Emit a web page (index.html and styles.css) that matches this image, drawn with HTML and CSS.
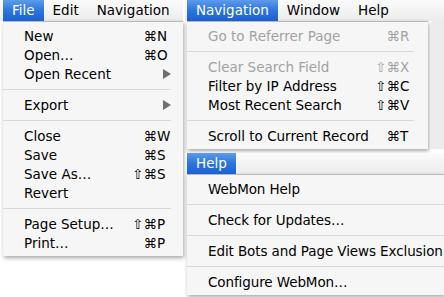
FILE: index.html
```html
<!DOCTYPE html>
<html lang="en">
<head>
  <meta charset="UTF-8">
  <title>WebMon Menus</title>
  <link rel="stylesheet" href="styles.css">
</head>
<body>

  <div class="screen">

    <!-- File menu -->
    <div class="panel panel-file">
      <div class="menubar">
        <span class="title active">File</span>
        <span class="title">Edit</span>
        <span class="title">Navigation</span>
      </div>
      <ul class="menu menu-file">
        <li class="item"><span class="label">New</span><span class="keys"><span class="mods">⌘</span><span class="key">N</span></span></li>
        <li class="item"><span class="label">Open…</span><span class="keys"><span class="mods">⌘</span><span class="key">O</span></span></li>
        <li class="item"><span class="label">Open Recent</span><span class="keys"><svg class="arrow" width="8" height="10" viewBox="0 0 8 10"><polygon points="0,0 8,5 0,10"/></svg></span></li>
        <li class="sep"></li>
        <li class="item"><span class="label">Export</span><span class="keys"><svg class="arrow" width="8" height="10" viewBox="0 0 8 10"><polygon points="0,0 8,5 0,10"/></svg></span></li>
        <li class="sep"></li>
        <li class="item"><span class="label">Close</span><span class="keys"><span class="mods">⌘</span><span class="key">W</span></span></li>
        <li class="item"><span class="label">Save</span><span class="keys"><span class="mods">⌘</span><span class="key">S</span></span></li>
        <li class="item"><span class="label">Save As…</span><span class="keys"><span class="mods">⇧⌘</span><span class="key">S</span></span></li>
        <li class="item"><span class="label">Revert</span></li>
        <li class="sep"></li>
        <li class="item"><span class="label">Page Setup…</span><span class="keys"><span class="mods">⇧⌘</span><span class="key">P</span></span></li>
        <li class="item"><span class="label">Print…</span><span class="keys"><span class="mods">⌘</span><span class="key">P</span></span></li>
      </ul>
    </div>

    <div class="stack">

      <!-- Navigation menu -->
      <div class="panel panel-nav">
        <div class="menubar">
          <span class="title active">Navigation</span>
          <span class="title">Window</span>
          <span class="title">Help</span>
        </div>
        <div class="drop-row">
          <ul class="menu menu-nav">
            <li class="item disabled"><span class="label">Go to Referrer Page</span><span class="keys"><span class="mods">⌘</span><span class="key">R</span></span></li>
            <li class="sep"></li>
            <li class="item disabled"><span class="label">Clear Search Field</span><span class="keys"><span class="mods">⇧⌘</span><span class="key">X</span></span></li>
            <li class="item"><span class="label">Filter by IP Address</span><span class="keys"><span class="mods">⇧⌘</span><span class="key">C</span></span></li>
            <li class="item"><span class="label">Most Recent Search</span><span class="keys"><span class="mods">⇧⌘</span><span class="key">V</span></span></li>
            <li class="sep"></li>
            <li class="item"><span class="label">Scroll to Current Record</span><span class="keys"><span class="mods">⌘</span><span class="key">T</span></span></li>
          </ul>
          <div class="behind"></div>
        </div>
      </div>

      <!-- Help menu -->
      <div class="panel panel-help">
        <div class="menubar">
          <span class="title active">Help</span>
        </div>
        <ul class="menu menu-help">
          <li class="item"><span class="label">WebMon Help</span></li>
          <li class="sep"></li>
          <li class="item"><span class="label">Check for Updates…</span></li>
          <li class="sep"></li>
          <li class="item"><span class="label">Edit Bots and Page Views Exclusion</span></li>
          <li class="sep"></li>
          <li class="item"><span class="label">Configure WebMon…</span></li>
        </ul>
      </div>

      <div class="window-edge"></div>
    </div>

  </div>

</body>
</html>
```

FILE: styles.css
```css
body {
  margin: 0;
  width: 444px;
  height: 297px;
  overflow: hidden;
  background: #fff;
  font-family: "DejaVu Sans", "Liberation Sans", sans-serif;
  font-size: 13.5px;
  color: #000;
}

.screen {
  display: flex;
  height: 297px;
}

.panel-file {
  width: 183px;
  flex: none;
}

.stack {
  flex: 1;
  min-width: 0;
  margin-left: 2px;
  display: flex;
  flex-direction: column;
  gap: 4px;
}

/* menu bar */
.menubar {
  display: flex;
  height: 21px;
  background: linear-gradient(#fbfbfb, #ececec);
  white-space: nowrap;
}

.panel-file .menubar {
  padding-left: 3px;
}

.panel-nav .menubar,
.panel-help .menubar {
  padding-left: 2px;
}

.title {
  padding: 0 9px;
  line-height: 21px;
}

.title.active {
  color: #fff;
  background: linear-gradient(#5d9cec, #2d74dc 50%, #1c61d2);
}

/* drop-down menus */
.menu {
  list-style: none;
  margin: 0;
  padding: 4px 0;
  background: #f6f6f6;
  border-top: 1px solid #b9b9b9;
  box-shadow: 1px 2px 4px rgba(0,0,0,0.35);
  white-space: nowrap;
}

.menu-file {
  margin-left: 3px;
  padding-right: 12px;
}

.drop-row {
  display: flex;
}

.menu-nav {
  width: 241px;
  flex: none;
  margin-left: 2px;
  padding-right: 14px;
  box-sizing: border-box;
}

.behind {
  flex: 1;
  margin-left: 3px;
  background: #ececec;
}

.menu-help {
  margin-left: 2px;
  overflow: hidden;
  letter-spacing: -0.1px;
}

.item {
  display: flex;
  justify-content: space-between;
  align-items: center;
  height: 19px;
  padding-left: 21px;
}

.item.disabled {
  color: #a2a2a2;
}

.sep {
  height: 12px;
  display: flex;
  align-items: center;
}

.sep::before {
  content: "";
  flex: 1;
  height: 1px;
  background: #d9d9d9;
}

.keys {
  display: flex;
  align-items: center;
}

.mods {
  text-align: right;
}

.key {
  width: 14px;
}

.arrow {
  fill: #6f6f6f;
}

.window-edge {
  flex: 1;
  background: #34465c;
}
```
